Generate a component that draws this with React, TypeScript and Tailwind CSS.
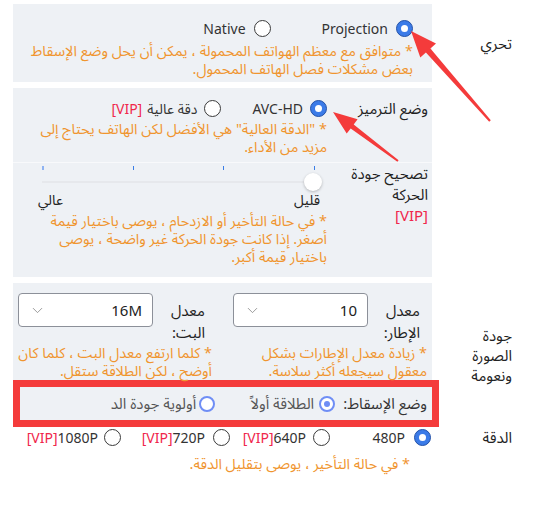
import { ChevronDown } from "lucide-react";

type Tone = "dark" | "light";

const Radio = ({ checked = false, tone = "dark" }: { checked?: boolean; tone?: Tone }) => {
  if (tone === "light") {
    return (
      <span className="flex h-[16px] w-[16px] shrink-0 items-center justify-center rounded-full border-2 border-[#6f8ef5] bg-white">
        {checked && <span className="h-[6px] w-[6px] rounded-full bg-[#6f8ef5]" />}
      </span>
    );
  }
  return checked ? (
    <span className="flex h-[17px] w-[17px] shrink-0 items-center justify-center rounded-full border border-[#2452a8] bg-[#3b7be8]">
      <span className="h-[7px] w-[7px] rounded-full bg-white" />
    </span>
  ) : (
    <span className="h-[17px] w-[17px] shrink-0 rounded-full border border-[#3a3a3a] bg-white" />
  );
};

const Vip = () => (
  <span dir="ltr" className="text-[#f0264b]">
    [VIP]
  </span>
);

// fixed-height lines so the arabic fallback font can't stretch the line boxes
const Note = ({ lines, className = "" }: { lines: string[]; className?: string }) => (
  <div className={`text-[14.5px] text-[#f0952f] ${className}`}>
    {lines.map((l) => (
      <div key={l} className="h-[18px] whitespace-nowrap leading-[18px]">
        {l}
      </div>
    ))}
  </div>
);

const Select = ({ value }: { value: string }) => (
  <div className="flex h-[34px] w-[135px] items-center justify-between rounded-[4px] border border-[#8c9099] bg-white px-[10px]">
    <span className="text-[15px] text-[#222]">{value}</span>
    <ChevronDown size={17} strokeWidth={1.2} className="text-[#8a8a8a]" />
  </div>
);

const RateCol = ({ top, bottom, value, note }: { top: string; bottom: string; value: string; note: string[] }) => (
  <div>
    <div className="flex justify-between pl-[5px] pr-[8px]">
      <div className="pt-[6px] text-[15px]">
        <div className="h-[22px] leading-[22px]">{top}</div>
        <div className="h-[22px] leading-[22px]">{bottom}</div>
      </div>
      <Select value={value} />
    </div>
    <Note lines={note} className="pr-[1px]" />
  </div>
);

// red annotation arrows
const arrow = (tip: [number, number], tail: [number, number], head: number, headW: number, shaftW: number, tailW: number) => {
  const [tx, ty] = tip;
  const [lx, ly] = tail;
  const len = Math.hypot(lx - tx, ly - ty);
  const ux = (lx - tx) / len;
  const uy = (ly - ty) / len;
  const nx = -uy;
  const ny = ux;
  const bx = tx + ux * head;
  const by = ty + uy * head;
  const p = (x: number, y: number) => `${x.toFixed(1)},${y.toFixed(1)}`;
  return [
    p(tx, ty),
    p(bx + (nx * headW) / 2, by + (ny * headW) / 2),
    p(bx + (nx * shaftW) / 2, by + (ny * shaftW) / 2),
    p(lx + (nx * tailW) / 2, ly + (ny * tailW) / 2),
    p(lx - (nx * tailW) / 2, ly - (ny * tailW) / 2),
    p(bx - (nx * shaftW) / 2, by - (ny * shaftW) / 2),
    p(bx - (nx * headW) / 2, by - (ny * headW) / 2),
  ].join(" ");
};

export default function App() {
  return (
    <div
      dir="rtl"
      className="relative h-[507px] w-[534px] overflow-hidden bg-white pt-[4px] font-['Noto_Sans','Noto_Sans_Arabic','DejaVu_Sans',sans-serif] text-[#222]"
    >
      {/* تحري */}
      <div className="flex gap-[28px] pr-[22px]">
        <div className="flex w-[52px] items-center text-[15px]">تحري</div>
        <div className="h-[78px] w-[419px] bg-[#eef1f5] pr-[19px] pt-[14px]">
          <div className="flex h-[20px] items-center gap-[51px] text-[14px] text-[#333]">
            <div className="flex items-center gap-[8px]">
              <Radio checked />
              <span>Projection</span>
            </div>
            <div className="flex items-center gap-[8px]">
              <Radio />
              <span>Native</span>
            </div>
          </div>
          <Note
            className="mt-[3px]"
            lines={["* متوافق مع معظم الهواتف المحمولة ، يمكن أن يحل وضع الإسقاط", "بعض مشكلات فصل الهاتف المحمول."]}
          />
        </div>
      </div>

      {/* encoding + motion */}
      <div className="mt-[6px] flex gap-[28px] pr-[22px]">
        <div className="w-[52px]" />
        <div className="h-[189px] w-[419px] bg-[#eef1f5] pt-[10px]">
          <div className="flex gap-[6px] pl-[24px] pr-[4px]">
            <div className="h-[20px] w-[95px] text-[15px] leading-[20px]">وضع الترميز</div>
            <div className="w-[290px]">
              <div className="flex h-[20px] items-center gap-[31px] text-[14px] text-[#333]">
                <div className="flex items-center gap-[7px]">
                  <Radio checked />
                  <span>AVC-HD</span>
                </div>
                <div className="flex items-center gap-[7px]">
                  <Radio />
                  <span className="flex gap-[5px]">
                    <span>دقة عالية</span>
                    <Vip />
                  </span>
                </div>
              </div>
              <Note className="mt-[1px]" lines={['* "الدقة العالية" هي الأفضل لكن الهاتف يحتاج إلى', "مزيد من الأداء."]} />
            </div>
          </div>
          <div className="mt-[7px] border-t border-[#f8f9fb]" />
          <div className="flex gap-[6px] pl-[24px] pr-[4px]">
            <div className="w-[95px] text-[15px]">
              <div className="h-[21px] leading-[21px]">تصحيح جودة</div>
              <div className="h-[21px] leading-[21px]">الحركة</div>
              <div className="h-[21px] leading-[21px]">
                <Vip />
              </div>
            </div>
            <div className="w-[290px]">
              <div className="relative h-[48px]">
                <span className="absolute left-[5px] top-[3px] h-[4px] w-[2px] bg-[#8fb3f2]" />
                <span className="absolute left-[96px] top-[3px] h-[4px] w-[1px] bg-[#3a7de6]" />
                <span className="absolute left-[186px] top-[3px] h-[4px] w-[1px] bg-[#3a7de6]" />
                <span className="absolute left-[277px] top-[3px] h-[4px] w-[1px] bg-[#3a7de6]" />
                <span className="absolute left-[5px] top-[18px] h-[2px] w-[272px] bg-[#e6e8ec]" />
                <span className="absolute left-[267px] top-[10px] h-[18px] w-[18px] rounded-full bg-white shadow-[0_1px_3px_rgba(0,0,0,0.25)]" />
                <span className="absolute left-[257px] top-[27px] text-[14px] leading-[20px]">قليل</span>
                <span className="absolute left-[1px] top-[27px] text-[14px] leading-[20px]">عالي</span>
              </div>
              <Note
                lines={[
                  "* في حالة التأخير أو الازدحام ، يوصى باختيار قيمة",
                  "أصغر. إذا كانت جودة الحركة غير واضحة ، يوصى",
                  "باختيار قيمة أكبر.",
                ]}
              />
            </div>
          </div>
        </div>
      </div>

      {/* quality + smoothness */}
      <div className="mt-[6px] flex gap-[28px] pr-[22px]">
        <div className="flex w-[52px] items-center text-[15px]">
          <div>
            <div className="h-[20px] leading-[20px]">جودة</div>
            <div className="h-[20px] leading-[20px]">الصورة</div>
            <div className="h-[20px] leading-[20px]">ونعومة</div>
          </div>
        </div>
        <div className="w-[419px]">
          <div className="grid h-[97px] grid-cols-2 gap-[15px] bg-[#eef1f5] pr-[4px] pt-[10px]">
            <RateCol
              top="معدل"
              bottom="الإطار:"
              value="10"
              note={["* زيادة معدل الإطارات بشكل", "معقول سيجعله أكثر سلاسة."]}
            />
            <RateCol
              top="معدل"
              bottom="البت:"
              value="16M"
              note={["* كلما ارتفع معدل البت ، كلما كان", "أوضح ، لكن الطلاقة ستقل."]}
            />
          </div>
          <div className="-mr-[7px] flex h-[47px] w-[426px] items-center gap-[8px] border-[7px] border-[#f43b3b] bg-[#eef1f5] pr-[5px] text-[15px]">
            <span className="text-[#333]">وضع الإسقاط:</span>
            <div className="flex items-center gap-[5px]">
              <Radio tone="light" checked />
              <span className="text-[#555]">الطلاقة أولاً</span>
            </div>
            <div className="mr-[27px] flex items-center gap-[3px]">
              <Radio tone="light" />
              <span className="text-[#555]">أولوية جودة الد</span>
            </div>
          </div>
        </div>
      </div>

      {/* resolution */}
      <div className="flex gap-[28px] pr-[22px]">
        <div className="h-[20px] w-[52px] text-[15px] leading-[20px]">الدقة</div>
        <div className="w-[419px]">
          <div className="flex h-[20px] items-center text-[14px] text-[#333]">
            <div className="flex w-[100px] items-center gap-[9px] pr-[1px]">
              <Radio checked />
              <span>480P</span>
            </div>
            <div className="flex w-[100px] items-center gap-[7px] pr-[2px]">
              <Radio />
              <span>
                640P
                <Vip />
              </span>
            </div>
            <div className="flex w-[111px] items-center gap-[8px] pr-[2px]">
              <Radio />
              <span>
                720P
                <Vip />
              </span>
            </div>
            <div className="flex items-center gap-[6px]">
              <Radio />
              <span>
                1080P
                <Vip />
              </span>
            </div>
          </div>
          <Note className="mt-[7px] pr-[22px]" lines={["* في حالة التأخير ، يوصى بتقليل الدقة."]} />
        </div>
      </div>

      <svg className="pointer-events-none absolute left-0 top-0" width="534" height="507">
        <polygon points={arrow([411, 31], [490, 121], 26, 21, 6, 2)} fill="#f43b3b" />
        <polygon points={arrow([333, 112], [398, 161], 24, 18, 5, 2)} fill="#f43b3b" />
      </svg>
    </div>
  );
}
